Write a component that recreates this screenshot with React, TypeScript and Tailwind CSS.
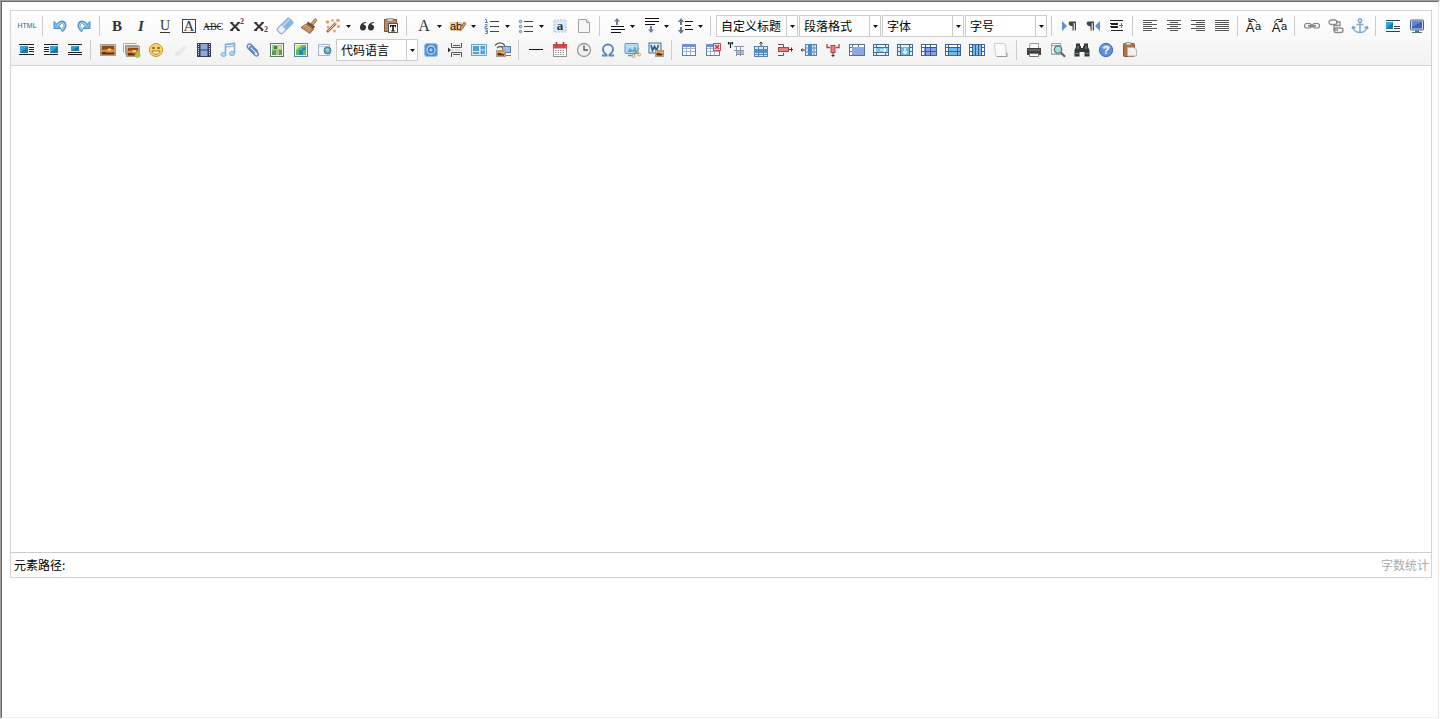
import React from "react";

type Item = {
  name?: string;
  split?: boolean;
  off?: boolean;
  sep?: boolean;
  combo?: string;
};

const SEP: Item = { sep: true };

const buttons = (names: string): Item[] =>
  names.split(" ").map((name) => ({ name }));

const splits = (names: string): Item[] =>
  names.split(" ").map((name) => ({ name, split: true }));

const combos = (...labels: string[]): Item[] =>
  labels.map((combo) => ({ combo }));

const toolbar: Item[] = [
  ...buttons("source"),
  SEP,
  ...buttons("undo redo"),
  SEP,
  ...buttons(
    "bold italic underline fontborder strikethrough superscript subscript removeformat formatmatch",
  ),
  ...splits("autotypeset"),
  ...buttons("blockquote pasteplain"),
  SEP,
  ...splits("forecolor backcolor orderedlist unorderedlist"),
  ...buttons("selectall cleardoc"),
  SEP,
  ...splits("rowspacingtop rowspacingbottom lineheight"),
  SEP,
  ...combos("自定义标题", "段落格式", "字体", "字号"),
  SEP,
  ...buttons("ltr rtl indent"),
  SEP,
  ...buttons("justifyleft justifycenter justifyright justifyjustify"),
  SEP,
  ...buttons("touppercase tolowercase"),
  SEP,
  ...buttons("link unlink anchor"),
  SEP,
  ...buttons("imagenone fullscreen"),
  ...buttons("imageleft imageright imagecenter"),
  SEP,
  ...buttons("simpleupload insertimage emotion"),
  { name: "scrawl", off: true },
  ...buttons("insertvideo music attachment map gmap insertframe"),
  ...combos("代码语言"),
  ...buttons("webapp pagebreak template background"),
  SEP,
  ...buttons("horizontal date time spechars snapscreen wordimage"),
  SEP,
  ...buttons(
    "inserttable deletetable paragraphbeforetable insertrow deleterow insertcol deletecol mergecells mergeright mergedown splittocells splittorows splittocols charts",
  ),
  SEP,
  ...buttons("print preview searchreplace help drafts"),
];

/* Horizontal rules, each one [x, y, width] */
const Lines = ({ rows, color = "#222" }: { rows: number[][]; color?: string }) => (
  <g fill={color}>
    {rows.map(([x, y, w], i) => (
      <rect key={i} x={x} y={y} width={w} height="1" />
    ))}
  </g>
);

/* The small table that most of the table commands are built on */
const Grid = ({ fill = "#fff" }: { fill?: string }) => (
  <g>
    <rect x="1.5" y="2.5" width="13" height="11" fill={fill} stroke="#5d7fae" />
    <path d="M2 6.5h12M2 9.5h12M5.5 3v10M9.5 3v10" stroke="#9bb4da" />
  </g>
);

const Photo = ({ x, y, w, h }: { x: number; y: number; w: number; h: number }) => (
  <g transform={`translate(${x} ${y})`}>
    <rect width={w} height={h} fill="#fff" stroke="#a89c90" />
    <rect x="1" y="1" width={w - 2} height={h - 2} fill="#8c4a1c" />
    <path d={`M1 ${h - 5}q3-2 ${w - 2}-1v3H1z`} fill="#e08a30" />
    <ellipse cx={w * 0.6} cy={h * 0.45} rx="2" ry="1" fill="#ffd98a" />
    <path d={`M1 ${h - 1}v-2q3-1 5 0t${w - 7} 0v2z`} fill="#5a2c10" />
  </g>
);

const BlueBox = ({ x, y, w, h }: { x: number; y: number; w: number; h: number }) => (
  <g>
    <rect x={x} y={y} width={w} height={h} fill="#1a78ad" />
    <path d={`M${x} ${y}h${w}L${x} ${y + h}z`} fill="#35a3d3" />
  </g>
);

const Glyph = ({
  x = 8,
  y = 12,
  size = 15,
  color = "#333",
  font = "Liberation Serif",
  weight = "bold",
  style = "normal",
  children,
}: {
  x?: number;
  y?: number;
  size?: number;
  color?: string;
  font?: string;
  weight?: string;
  style?: string;
  children: React.ReactNode;
}) => (
  <text
    x={x}
    y={y}
    fontSize={size}
    fill={color}
    fontFamily={`"${font}", serif`}
    fontWeight={weight}
    fontStyle={style}
    textAnchor="middle"
  >
    {children}
  </text>
);

const curl = (
  <>
    <path
      d="M5 8.5C6.5 4.5 10.5 3 12.3 5.300c1.500 2.200 0 5.500-2.800 7.700"
      stroke="#4a8fc4"
      strokeWidth="3.2"
    />
    <path d="M2 3.500v7h7z" fill="#7dbbe6" stroke="#4a8fc4" strokeLinejoin="round" />
    <path d="M5.500 7.500C7 5 10 4 11.800 5.700c1.200 2 .2 4.500-1.800 6.500" stroke="#9fd2f3" strokeWidth="1.500" />
  </>
);

const letterCase = (
  <>
    <Glyph x={3} y={14} size={13} font="Liberation Sans" weight="normal" color="#111">
      A
    </Glyph>
    <Glyph x={11} y={12} size={11} font="Liberation Sans" weight="normal" color="#111">
      a
    </Glyph>
  </>
);

const pilcrow = (
  <path d="M5 3.5h6v9H9.800V5H8.700v7.500H7.500V8.300C3 8.500 3 3.500 5 3.500z" fill="#444" />
);

const icons: Record<string, React.ReactNode> = {
  source: (
    <Glyph y={10} size={7} font="Liberation Sans" weight="normal" color="#2f5f85">
      HTML
    </Glyph>
  ),
  undo: curl,
  redo: <g transform="translate(16 0) scale(-1 1)">{curl}</g>,
  bold: <Glyph y={13}>B</Glyph>,
  italic: (
    <Glyph y={13} style="italic">
      I
    </Glyph>
  ),
  underline: (
    <>
      <Glyph size={14} weight="normal">
        U
      </Glyph>
      <path d="M3 14.5h10" stroke="#333" />
    </>
  ),
  fontborder: (
    <>
      <rect x="1.5" y="1.5" width="13" height="13" fill="none" stroke="#444" />
      <Glyph y={13} size={15} weight="normal">
        A
      </Glyph>
    </>
  ),
  strikethrough: (
    <>
      <Glyph size={10} y={12} weight="normal" color="#222">
        ABC
      </Glyph>
      <path d="M0 8.5h16" stroke="#222" />
    </>
  ),
  superscript: (
    <>
      <path d="M2 4.500l8 8M10 4.500l-8 8" stroke="#333" strokeWidth="2" />
      <path d="M1 4.500h3M8.500 4.500H11M1 12.500h3M8 12.500h3" stroke="#333" />
      <Glyph x={13} y={6} size={8} color="#445">
        2
      </Glyph>
    </>
  ),
  subscript: (
    <>
      <path d="M2 4.500l8 8M10 4.500l-8 8" stroke="#333" strokeWidth="2" />
      <path d="M1 4.500h3M8.500 4.500H11M1 12.500h3M8 12.500h2" stroke="#333" />
      <Glyph x={13} y={14} size={8} color="#445">
        2
      </Glyph>
    </>
  ),
  removeformat: (
    <g transform="rotate(-45 8 8)">
      <rect x="-.5" y="4.5" width="17" height="7" rx="1.5" fill="#e8f1fa" stroke="#86a3c4" />
      <path d="M6 5h10v6H6z" fill="#7fb4e2" />
      <path d="M6 6.500h10" stroke="#b7d8f3" strokeWidth="1.500" />
    </g>
  ),
  formatmatch: (
    <>
      <path d="M10 5.500L14 .5l2 1.500-3.500 5z" fill="#d9a26a" stroke="#8b5a2b" strokeWidth=".7" />
      <path d="M7 3.500l7 5-1.500 2.500-7-5z" fill="#7d4b33" />
      <path d="M5 6l7.500 5L9 15.500 0 9.500z" fill="#b98352" stroke="#7d4d26" strokeWidth=".7" />
      <path d="M2 9.500l4-2.500M4.500 11.500l4-3M7 13.500l3-3.500" stroke="#e6c39a" strokeWidth=".8" />
    </>
  ),
  autotypeset: (
    <>
      <path d="M2 14L11 5" stroke="#a8683f" strokeWidth="2.5" />
      <path d="M3 13l8-8" stroke="#f0c4a0" />
      <g fill="#e8a050">
        <circle cx="2.5" cy="4" r="1.8" />
        <circle cx="7.500" cy="2.500" r="1.300" />
        <circle cx="13" cy="2.500" r="1.800" />
        <circle cx="13.500" cy="8.500" r="1.600" />
        <circle cx="9.500" cy="13" r="1.400" />
        <circle cx="3" cy="9" r="1.300" />
      </g>
    </>
  ),
  blockquote: (
    <path
      d="M7 4C3 4 1 6.500 1 9.500a3 3 0 1 0 3.500-3C4.500 5.500 5.500 5 7 5zM15 4c-4 0-6 2.500-6 5.500a3 3 0 1 0 3.500-3c0-1 1-1.500 2.500-1.500z"
      fill="#333"
    />
  ),
  pasteplain: (
    <>
      <rect x="1.5" y="1.5" width="12" height="12" fill="#b98a68" stroke="#80583c" />
      <path d="M4 .5h6v3H4z" fill="#ccc" stroke="#777" strokeWidth=".6" />
      <rect x="5.5" y="5.5" width="9" height="9" fill="#fff" stroke="#555" />
      <path d="M7 7h6v2.300h-1V8.300h-1.200v4.200h1v1H8.200v-1h1V8.300H8v1H7z" fill="#111" />
    </>
  ),
  forecolor: (
    <Glyph size={16} y={13} weight="normal">
      A
    </Glyph>
  ),
  backcolor: (
    <>
      <rect x="0" y="4" width="12" height="9" fill="#f3cda0" />
      <Glyph x={6} y={12} size={11} font="Liberation Sans" weight="normal" color="#111">
        ab
      </Glyph>
      <path d="M10 12.500l.5-3L14 4l2 1.500-3.500 5.500z" fill="#d9954c" stroke="#80552a" strokeWidth=".7" />
    </>
  ),
  orderedlist: (
    <>
      <Lines rows={[[6, 3, 9], [6, 8, 9], [6, 13, 9]]} color="#444" />
      <path
        d="M1 1.500h1.500v3M1 4.500h3M1 6.500h2v2H1v2h3M1 12h2.500v3.500H1M1.500 13.500H3"
        fill="none"
        stroke="#5a86ad"
      />
    </>
  ),
  unorderedlist: (
    <>
      <Lines rows={[[6, 3, 9], [6, 8, 9], [6, 13, 9]]} color="#444" />
      <g fill="#b8d2ea" stroke="#4f7fa8" strokeWidth=".8">
        <circle cx="2.500" cy="3.500" r="1.300" />
        <circle cx="2.500" cy="8.500" r="1.300" />
        <circle cx="2.500" cy="13.500" r="1.300" />
      </g>
    </>
  ),
  selectall: (
    <>
      <rect x="2" y="2" width="12" height="12" fill="#dceaf7" stroke="#a9c6e0" strokeDasharray="2 1" />
      <Glyph y={12} size={13} color="#234">
        a
      </Glyph>
    </>
  ),
  cleardoc: (
    <>
      <path d="M2.5 1.5h8l3 3v10h-11z" fill="#f6f6f6" stroke="#a3a3a3" />
      <path d="M10.500 1.500v3h3" fill="#ddd" stroke="#a3a3a3" />
    </>
  ),
  rowspacingtop: (
    <>
      <path d="M8 0L5 3.500h2V7h2V3.500h2z" fill="#6d7f9c" />
      <Lines rows={[[2, 8, 13], [2, 11, 14], [2, 14, 10]]} color="#111" />
    </>
  ),
  rowspacingbottom: (
    <>
      <Lines rows={[[2, 0, 14], [2, 3, 14], [2, 6, 10]]} color="#111" />
      <path d="M8 15l3-3.500H9V8H7v3.500H5z" fill="#6d7f9c" />
    </>
  ),
  lineheight: (
    <>
      <path d="M4 0L1 4h2v3h2V4h2zM4 16l3-4H5V9H3v3H1z" fill="#5f7591" />
      <Lines rows={[[8, 3, 8], [8, 7, 6], [8, 11, 8]]} color="#111" />
    </>
  ),
  ltr: (
    <>
      <path d="M1 3L6 8l-5 5z" fill="#5a92cc" />
      <g transform="translate(4 0)">{pilcrow}</g>
    </>
  ),
  rtl: (
    <>
      <path d="M15 3l-5 5 5 5z" fill="#5a92cc" />
      <g transform="translate(-2 0)">{pilcrow}</g>
    </>
  ),
  indent: (
    <>
      <Lines rows={[[1, 2, 13], [1, 5, 8], [2, 6, 7], [1, 8, 8], [2, 9, 7], [2, 12, 12]]} />
      <path d="M10 7.500h4M12.500 5v5" fill="none" stroke="#66788c" />
    </>
  ),
  justifyleft: (
    <Lines
      rows={[[1, 2, 14], [1, 4, 9], [1, 6, 14], [1, 8, 9], [1, 10, 14], [1, 12, 9]]}
      color="#555"
    />
  ),
  justifycenter: (
    <Lines
      rows={[[1, 2, 14], [4, 4, 8], [1, 6, 14], [4, 8, 8], [1, 10, 14], [4, 12, 8]]}
      color="#555"
    />
  ),
  justifyright: (
    <Lines
      rows={[[1, 2, 14], [6, 4, 9], [1, 6, 14], [6, 8, 9], [1, 10, 14], [6, 12, 9]]}
      color="#555"
    />
  ),
  justifyjustify: (
    <Lines
      rows={[[1, 2, 14], [1, 4, 14], [1, 6, 14], [1, 8, 14], [1, 10, 14], [1, 12, 14]]}
      color="#555"
    />
  ),
  touppercase: (
    <>
      {letterCase}
      <path d="M2 3.500C4 .5 8 .5 9.500 4.500M2 0v3.500h3.500" fill="none" stroke="#111" />
    </>
  ),
  tolowercase: (
    <g transform="translate(2 0)">
      {letterCase}
      <path d="M1.500 4.500C3 .5 7 .5 9 3.500M9 0v3.500H5.500" fill="none" stroke="#111" />
    </g>
  ),
  link: (
    <g fill="none" stroke="#808080" strokeWidth="1.200">
      <rect x=".5" y="5.500" width="7" height="4.500" rx="2.200" />
      <rect x="8.500" y="5.500" width="7" height="4.500" rx="2.200" />
      <path d="M4 7.800h8" strokeWidth="1.800" />
    </g>
  ),
  unlink: (
    <g fill="none" stroke="#8b8b8b" strokeWidth="1.300">
      <rect x="1" y="2" width="8" height="4.500" rx="2.200" />
      <rect x="6" y="10" width="9" height="4.500" rx="2.200" />
      <path d="M8 4h4v3.500H6V12h4" />
    </g>
  ),
  anchor: (
    <g fill="none" stroke="#7aaace" strokeWidth="1.500">
      <circle cx="8" cy="2.500" r="1.700" />
      <path d="M8 4v10.500M4.500 6.500h7M1 8.500c.5 4 3.500 6 7 6s6.500-2 7-6M0 11l1-2.500 2.500 1.500M16 11l-1-2.500-2.500 1.500" />
    </g>
  ),
  imagenone: (
    <>
      <Lines rows={[[1, 2, 14], [9, 8, 6], [9, 10, 6], [1, 13, 14]]} color="#27465e" />
      <BlueBox x={1} y={4} w={7} h={7} />
    </>
  ),
  fullscreen: (
    <>
      <rect x="1.5" y="2" width="13" height="10" rx="1" fill="#cfd8e8" stroke="#46648f" />
      <rect x="3" y="3.500" width="10" height="7" fill="#3d62b8" />
      <path d="M3 3.500h10L3 9z" fill="#6384cc" />
      <path d="M6 12.500h4v1.500h3v1H3v-1h3z" fill="#4f7a5e" />
    </>
  ),
  imageleft: (
    <>
      <Lines rows={[[0, 2, 15], [10, 5, 5], [10, 7, 5], [10, 9, 5], [0, 12, 15]]} />
      <BlueBox x={1} y={4} w={8} h={7} />
    </>
  ),
  imageright: (
    <>
      <Lines rows={[[1, 2, 14], [1, 5, 5], [1, 7, 5], [1, 9, 5], [1, 12, 14]]} />
      <BlueBox x={7} y={4} w={8} h={7} />
    </>
  ),
  imagecenter: (
    <>
      <Lines rows={[[1, 2, 14], [1, 10, 14], [1, 12, 14]]} />
      <BlueBox x={4} y={4} w={8} h={5} />
    </>
  ),
  simpleupload: <Photo x={0.5} y={2.5} w={15} h={11} />,
  insertimage: (
    <>
      <path d="M-.5 10.500v-9h13" fill="none" stroke="#aaa" />
      <path d="M1.500 12.500v-9h13" fill="none" stroke="#999" />
      <Photo x={2.5} y={4.5} w={13} h={10} />
      <path d="M13.500 10.500v5.500M11 13.300h5.500" stroke="#9acb3c" strokeWidth="2.500" />
    </>
  ),
  emotion: (
    <>
      <circle cx="8" cy="8" r="6.500" fill="#fcd468" stroke="#cf9030" />
      <path d="M4 9h8c-.5 2.300-2 3.300-4 3.300S4.500 11.300 4 9z" fill="#fff3d0" stroke="#a56d20" strokeWidth=".9" />
      <circle cx="5.500" cy="6" r="1.200" fill="#8a5518" />
      <circle cx="10.500" cy="6" r="1.200" fill="#8a5518" />
    </>
  ),
  scrawl: (
    <>
      <path d="M6 9.500c-3 .5-4 2-3.500 4 3 .5 6-1 6-3z" fill="#e4e4e2" />
      <path d="M7 9.500L12 4l2 1.500-5 6z" fill="#eee" stroke="#ddd" strokeWidth=".7" />
    </>
  ),
  insertvideo: (
    <>
      <rect x="1" y="1" width="14" height="14" fill="#34415c" />
      <path d="M4.500 2h7v5.500h-7zM4.500 8.500h7V14h-7z" fill="#8ea6d8" />
      <path d="M2.500 2v12M13.500 2v12" stroke="#dfe6f2" strokeDasharray="1 1" />
    </>
  ),
  music: (
    <>
      <path d="M5.500 12.500V2.500l9-1v9.500" fill="none" stroke="#7fa9d8" strokeWidth="1.600" />
      <path d="M5.500 5l9-1" stroke="#9cbfe4" strokeWidth="1.500" />
      <g fill="#bcd5f0" stroke="#7fa9d8">
        <ellipse cx="3.500" cy="12.500" rx="2.500" ry="2" />
        <ellipse cx="12" cy="11.500" rx="2.500" ry="2" />
      </g>
    </>
  ),
  attachment: (
    <path
      d="M14 9.500L7.500 3C5 .7 1.500 3.500 4 6.200l7 7c2 1.800 4.500-.3 2.700-2.500L7.500 4.800C6 3.800 4.900 5.200 6 6.500l5 5"
      transform="translate(0 0)"
      fill="none"
      stroke="#6288bd"
      strokeWidth="1.400"
    />
  ),
  map: (
    <g transform="translate(1 0)">
      <rect x="1.500" y="1.500" width="13" height="13" fill="#eef4ee" stroke="#5e7a6a" />
      <rect x="3" y="3" width="10" height="10" fill="#a8c58a" />
      <path d="M3 9l4-1v5H3zM10 8h3v5h-3z" fill="#5c9a62" />
      <path d="M5 4h3v3H5z" fill="#3d7d58" />
      <path d="M9 4h3v3H9z" fill="#e6dc9a" />
    </g>
  ),
  gmap: (
    <g transform="translate(1 0)">
      <rect x="1.500" y="1.500" width="13" height="13" fill="#e6f2f8" stroke="#5c86a5" />
      <rect x="3" y="3" width="10" height="10" fill="#62bf5e" />
      <path d="M3 3h6L3 8z" fill="#efe055" />
      <path d="M6 13V8h3V6l4-1v3h-3v5z" fill="#2a86c4" />
    </g>
  ),
  insertframe: (
    <g transform="translate(1 0)">
      <rect x="1.500" y="2.500" width="11" height="11" fill="#f4f7fa" stroke="#a9b8c8" />
      <path d="M2 4.500h10" stroke="#b8cadd" />
      <circle cx="10.500" cy="8.500" r="3.500" fill="#6aa3c4" stroke="#4c7894" />
      <path d="M8.500 7.500l2-1.500 2 2-2 2z" fill="#a5d6b4" />
    </g>
  ),
  webapp: (
    <>
      <rect x="1.5" y="1.5" width="13" height="13" rx="2.5" fill="#4f92d6" stroke="#9cc0e4" />
      <circle cx="8" cy="8" r="4" fill="#3a7ccb" stroke="#b9d8f5" strokeWidth="1.300" />
      <circle cx="8" cy="8" r="1.700" fill="#9fd0f5" />
    </>
  ),
  pagebreak: (
    <>
      <path d="M4.500 1v4.500h10V1M4.500 15v-4.500h10V15M6 3.500h7M6 12.500h7" fill="none" stroke="#555" />
      <path d="M1 5.500L4 8l-3 2.500z" fill="#333" />
      <path d="M5 8h10" stroke="#bbb" strokeDasharray="2 1" />
    </>
  ),
  template: (
    <>
      <rect x=".5" y="2.500" width="15" height="11" fill="#d2ebf8" stroke="#6aa9cf" />
      <path d="M2 4h6v5H2zM2 10h6v2H2zM9.500 4H14v3.500H9.500zM9.500 8.500H14V12H9.500z" fill="#5a9fc8" />
    </>
  ),
  background: (
    <>
      <path d="M0 3.500c3-3.500 7-3.500 10 0M2 6c2-2 4-2 6 0" fill="none" stroke="#555" strokeWidth="1.200" />
      <rect x="7.500" y="4.500" width="8" height="6" fill="#9dbfe8" stroke="#56779f" />
      <Photo x={1.5} y={8.5} w={9} h={6} />
      <path d="M11 13.500h5" stroke="#56779f" />
    </>
  ),
  horizontal: <Lines rows={[[1, 7, 14]]} color="#111" />,
  date: (
    <>
      <rect x="1.500" y="2.500" width="13" height="12" fill="#fff" stroke="#9a8f8f" />
      <rect x="1" y="2" width="14" height="4.500" fill="#d6484a" />
      <path d="M4.500 0v3.500M11.500 0v3.500" stroke="#9a3a3a" strokeWidth="1.500" />
      <path d="M3 8.500h10M3 10.500h10M3 12.500h10" stroke="#9b9b9b" strokeDasharray="1.500 1" />
    </>
  ),
  time: (
    <>
      <circle cx="8" cy="8" r="6.500" fill="#f1f1f1" stroke="#999" strokeWidth="1.300" />
      <path d="M8 3.500V8h4" fill="none" stroke="#555" strokeWidth="1.300" />
    </>
  ),
  spechars: (
    <path
      d="M2 13.500h4.500v-1C4 11 3 9.500 3 7.300 3 4.500 5 2.500 8 2.500s5 2 5 4.800c0 2.200-1 3.700-3.500 5.200v1H14"
      fill="none"
      stroke="#5f86bf"
      strokeWidth="1.900"
    />
  ),
  snapscreen: (
    <>
      <rect x="1" y="1.500" width="13" height="10" rx="1" fill="#b5dcf2" stroke="#5b98c0" />
      <path d="M3 10l3-4 2.500 2.500L11 4l2 6z" fill="#5ea6d2" />
      <path d="M4 13.500h5" stroke="#5b98c0" strokeWidth="1.500" />
      <path d="M15 6l-5 7M10 9l5 3" stroke="#8b9b83" strokeWidth="1.200" />
      <circle cx="9.500" cy="14" r="1.500" fill="none" stroke="#c8a24c" />
      <circle cx="15" cy="12.500" r="1.500" fill="none" stroke="#c8a24c" />
    </>
  ),
  wordimage: (
    <>
      <rect x="1" y="1" width="12" height="10" fill="#e3eef8" stroke="#3f7199" />
      <path d="M3 3l1.500 5.500L6.500 4.500l2 4 2-5.500" fill="none" stroke="#255f94" strokeWidth="1.700" />
      <Photo x={7.5} y={8.5} w={8} h={6} />
    </>
  ),
  inserttable: (
    <>
      <Grid />
      <path d="M1 2h14v3H1z" fill="#7391d0" />
    </>
  ),
  deletetable: (
    <>
      <Grid />
      <path d="M1 2h8v3H1z" fill="#7391d0" />
      <rect x="8.500" y="1.500" width="7" height="7" fill="#fbe3e8" stroke="#c04a5a" />
      <path d="M10 3l4 4M14 3l-4 4" stroke="#c43040" strokeWidth="1.400" />
    </>
  ),
  paragraphbeforetable: (
    <>
      <path d="M-1 1h5M1.500 1v5M-.5 0v2.500M3.500 0v2.500" stroke="#222" strokeWidth="1.200" />
      <path d="M5 4.500h10M7.500 4v10M11.500 4v10M5 8.500h10M7 12.500h8" stroke="#8b97ab" />
      <path d="M8 9h3v3H8zM12 9h3v3h-3z" fill="#a9b9ec" />
    </>
  ),
  insertrow: (
    <>
      <rect x="1.500" y="4.500" width="13" height="10" fill="#dbe9f7" stroke="#5d7fae" />
      <path d="M1 7h14v4H1z" fill="#4a90d4" />
      <path d="M5.500 5v10M10.500 5v10M2 12.500h12" stroke="#5c7fb4" />
      <path d="M8 0v4M6.500 1.500L8 0l1.500 1.500" fill="none" stroke="#333" />
    </>
  ),
  deleterow: (
    <>
      <path d="M1 2.500h5.500V5M1 13.500h5.500V11" fill="none" stroke="#7a4a4a" />
      <rect x="1.500" y="5.500" width="10" height="4" fill="#e08484" stroke="#b04444" />
      <path d="M12 7.500h4M14.500 5.500v4" fill="none" stroke="#333" />
    </>
  ),
  insertcol: (
    <>
      <rect x="4.500" y="2.500" width="11" height="11" fill="#dbe9f7" stroke="#5d7fae" />
      <path d="M7 2h4v12H7z" fill="#3c8ad6" />
      <path d="M5 6h10M5 10h10M13 3v10" stroke="#6d8cba" />
      <path d="M4 8H0M1.500 6.500L0 8l1.500 1.500" fill="none" stroke="#333" />
    </>
  ),
  deletecol: (
    <>
      <path d="M2 2v3.500h3M14 2v3.500h-3" fill="none" stroke="#b04444" strokeWidth="1.300" />
      <rect x="6" y="3.500" width="4" height="7" fill="#e08484" stroke="#b04444" />
      <path d="M8 11v4M6.500 13.500h3" fill="none" stroke="#333" />
    </>
  ),
  mergecells: (
    <>
      <rect x=".5" y="2.500" width="15" height="11" fill="#fff" stroke="#5670a4" />
      <path d="M3.500 2v12M9.500 2v3M0 5.500h16M0 9.500h3" stroke="#5670a4" />
      <rect x="3" y="5" width="12" height="8" fill="#8fa8e2" />
    </>
  ),
  mergeright: (
    <>
      <rect x=".5" y="2.500" width="15" height="11" fill="#e4f2fa" stroke="#446a94" />
      <path d="M3.500 2v12M12.500 2v12M0 5.500h16M0 10.500h16" stroke="#446a94" />
      <rect x="3" y="6" width="12" height="4" fill="#7cc0e4" />
      <path d="M7 8h6M11 6l2 2-2 2" fill="none" stroke="#fff" strokeWidth="1.200" />
    </>
  ),
  mergedown: (
    <>
      <rect x=".5" y="2.500" width="15" height="11" fill="#e4f2fa" stroke="#446a94" />
      <path d="M3.500 2v12M12.500 2v12M0 5.500h16M0 9.500h16" stroke="#446a94" />
      <rect x="4" y="5" width="8" height="8" fill="#6fbade" />
      <path d="M8 6v5M6 9.500l2 2 2-2" fill="none" stroke="#fff" strokeWidth="1.300" />
    </>
  ),
  splittocells: (
    <>
      <rect x=".5" y="2.500" width="15" height="11" fill="#fff" stroke="#46649a" />
      <rect x="3" y="5" width="12" height="8" fill="#8aa0e4" />
      <path d="M.5 5.500h15M.5 9.500h15M4.500 2v12M9.500 2v12" stroke="#3c5494" />
    </>
  ),
  splittorows: (
    <>
      <rect x=".5" y="2.500" width="15" height="11" fill="#fff" stroke="#46649a" />
      <rect x="3" y="5" width="12" height="8" fill="#74b8ec" />
      <path d="M.5 5.500h15M.5 9.500h15M3.500 2v12M12.500 2v12" stroke="#305f95" />
    </>
  ),
  splittocols: (
    <>
      <rect x=".5" y="2.500" width="15" height="11" fill="#fff" stroke="#46649a" />
      <rect x="3" y="3" width="10" height="10" fill="#74b8ec" />
      <path d="M.5 5.500H3M.5 9.500H3M13 5.500h3M13 9.500h3M3.500 2v12M6.500 2v12M9.500 2v12M12.500 2v12" stroke="#305f95" />
    </>
  ),
  charts: (
    <>
      <path d="M1.500 1.500h9.500q2.500 2 2 9.500H15l-1 3.500H3.500l-1-2z" fill="#fafafa" stroke="#cfccc6" />
      <path d="M13 11l1 3.500H4" fill="none" stroke="#999" />
    </>
  ),
  print: (
    <>
      <path d="M4 1.500h8.500V7H3.500z" fill="#fff" stroke="#999" />
      <path d="M1 6h14v7H1z" fill="#3d3d3d" />
      <path d="M2 8h12" stroke="#888" />
      <path d="M3.500 11.500h9v3h-9z" fill="#f4f4f4" stroke="#777" />
    </>
  ),
  preview: (
    <>
      <path d="M1.500 1.500h9l1 11h-10z" fill="#f3f6f8" stroke="#98a5ad" />
      <path d="M2 3.500h8M2 12h5" stroke="#9aa" />
      <circle cx="8" cy="7.500" r="3.700" fill="#a6dbe2" stroke="#587480" strokeWidth="1.300" />
      <path d="M10.800 10.500l4.200 4.300" stroke="#5d605a" strokeWidth="2" />
    </>
  ),
  searchreplace: (
    <>
      <path
        d="M2 1.500h4V4h1v2h2V4h1V1.500h4V5l1.500 3v6.500h-5V10h-5v4.500h-5V8L2 5z"
        fill="#333a3a"
      />
      <path d="M1.500 11.500h3M11.500 11.500h3M4 4v3M12 4v3" stroke="#87928f" />
    </>
  ),
  help: (
    <>
      <circle cx="8" cy="8" r="6.700" fill="#5c8fe0" stroke="#4470b8" />
      <path d="M3 6c1-4 9-4 10 0-3 1.500-7 1.500-10 0z" fill="#8bb0ea" />
      <Glyph y={12} size={11} font="Liberation Sans" color="#fff">
        ?
      </Glyph>
    </>
  ),
  drafts: (
    <>
      <rect x="1.500" y="1.500" width="11" height="13" rx="1" fill="#b5703c" stroke="#8a5530" />
      <path d="M4 .5h5V3H4z" fill="#ddd" stroke="#777" strokeWidth=".6" />
      <path d="M5.500 5.500h6.500l2.500 2.500v6h-9z" fill="#f2f2f2" stroke="#b5b5b5" />
    </>
  ),
};

const Arrow = () => (
  <svg width="5" height="3" viewBox="0 0 5 3" className="shrink-0">
    <path d="M0 0h5L2.500 3z" fill="#111" />
  </svg>
);

const ToolbarButton = ({ name = "", split, off }: Item) => (
  <button
    type="button"
    title={name}
    disabled={off}
    className={
      split
        ? "flex h-6 w-[34px] items-center gap-[5px] pl-1"
        : "flex h-6 w-6 items-center justify-center"
    }
  >
    <svg width="16" height="16" viewBox="0 0 16 16" fill="none" className="shrink-0 overflow-visible">
      {icons[name]}
    </svg>
    {split && <Arrow />}
  </button>
);

const Combo = ({ label }: { label: string }) => (
  <div className="relative mr-px h-[22px] w-[82px] self-center">
    <select
      aria-label={label}
      className="block h-full w-full appearance-none border border-[#ccc] bg-white pr-3 pl-1 text-xs text-black outline-none"
    >
      <option>{label}</option>
    </select>
    <span className="pointer-events-none absolute inset-y-0 right-0 flex w-3 items-center justify-center border-l border-[#ccc]">
      <Arrow />
    </span>
  </div>
);

const Separator = () => (
  <span className="flex h-6 w-[9px] items-center pl-[3px]">
    <span className="h-5 w-px bg-[#ccc]" />
  </span>
);

const App = () => {
  return (
    <div className="flex min-h-screen border border-t-[#a0a0a0] border-r-white border-b-white border-l-[#a0a0a0] bg-white font-['Noto_Sans_CJK_SC',sans-serif] text-xs text-black">
      <div className="flex-1 border border-t-[#696969] border-r-[#e8e8e8] border-b-[#f0f0f0] border-l-[#696969] py-2 pr-1.5 pl-2">
        <div className="border border-[#d4d4d4]">
          {/* Toolbar */}
          <div className="flex flex-wrap border-b border-[#d4d4d4] bg-linear-to-b from-white to-[#f2f2f2] py-[3px] pl-1">
            {toolbar.map((item, i) => {
              if (item.sep) return <Separator key={i} />;
              if (item.combo) return <Combo key={i} label={item.combo} />;
              return <ToolbarButton key={i} {...item} />;
            })}
          </div>

          {/* Editing area */}
          <textarea
            aria-label="content"
            className="block h-[486px] w-full resize-none bg-white p-2 text-base outline-none"
          />

          {/* Bottom bar */}
          <div className="flex h-[25px] items-center justify-between border-t border-[#ccc] pr-0.5 pl-[3px]">
            <span>元素路径:</span>
            <span className="text-[#aaa]">字数统计</span>
          </div>
        </div>
      </div>
    </div>
  );
};

export default App;
